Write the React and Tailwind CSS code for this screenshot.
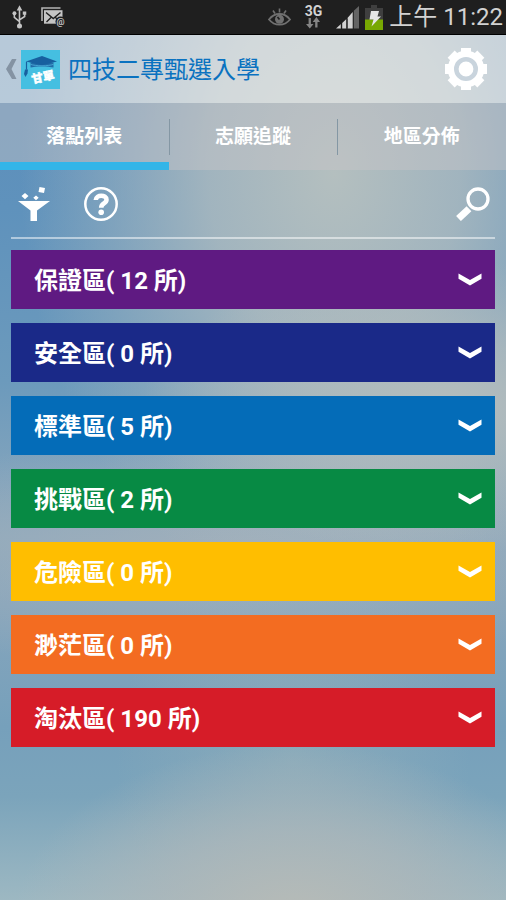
const zones = [
  { name: "保證區", count: 12, color: "bg-[#5f1a82]" },
  { name: "安全區", count: 0, color: "bg-[#1a2988]" },
  { name: "標準區", count: 5, color: "bg-[#046cb8]" },
  { name: "挑戰區", count: 2, color: "bg-[#078a44]" },
  { name: "危險區", count: 0, color: "bg-[#ffbe00]" },
  { name: "渺茫區", count: 0, color: "bg-[#f36c21]" },
  { name: "淘汰區", count: 190, color: "bg-[#d61c28]" },
];

const tabs = ["落點列表", "志願追蹤", "地區分佈"];

function UsbIcon() {
  return <svg width="15" height="26" viewBox="0 0 16 26" fill="none" stroke="#c4c4c4" strokeWidth="1.7">
    <path d="M8 4v17M2.500 10v3.500L8 18M13.500 9v3.500L8 16"/>
    <path d="M8 0.500l3 5.500H5zM11.500 7h3.700v3.700h-3.700z" fill="#c4c4c4" stroke="none"/>
    <circle cx="2.600" cy="9" r="2.100" fill="#c4c4c4" stroke="none"/>
    <circle cx="8" cy="22.500" r="2.700" fill="#c4c4c4" stroke="none"/>
  </svg>;
}

function MailIcon() {
  return <svg width="25" height="20" viewBox="0 0 25 20" fill="none">
    <path d="M1 14V1H19.500" stroke="#b4b4b4" strokeWidth="1.600"/>
    <path d="M3 3.200h18.500v13.500H3z" fill="#c4c4c4"/>
    <path d="M5 5.500l7.300 6L19.500 5.500M5.500 15l4.500-4.500M19 15l-4.500-4.500" stroke="#1f1f1f" strokeWidth="1.400"/>
    <circle cx="19.500" cy="14.500" r="5" fill="#1f1f1f"/>
    <text x="19.500" y="17.500" textAnchor="middle" fontSize="9" fontWeight="700" fontFamily="Roboto, sans-serif" fill="#c4c4c4">@</text>
  </svg>;
}

function EyeIcon() {
  return <svg width="23" height="18" viewBox="0 0 23 18" fill="none" stroke="#707070">
    <path d="M1 11.500C4 7.500 7.500 6 11.500 6s7.500 1.500 10.500 5.500c-3 3.700-6.500 5.200-10.500 5.200S4 15.200 1 11.500z" strokeWidth="1.800"/>
    <circle cx="11.500" cy="11.300" r="4.500" fill="#707070" stroke="none"/>
    <path d="M11.500 11.500L9.500 9" stroke="#1f1f1f" strokeWidth="1.700"/>
    <path d="M11.500 0.500v4M5 2.500l2 3M18 2.500l-2 3" strokeWidth="1.600"/>
  </svg>;
}

function DataArrowsIcon() {
  return <svg width="14" height="12" viewBox="0 0 14 12" fill="#858585">
    <path d="M2.600 1h2.300v6H7.500l-3.700 4.500L0 7h2.600z"/>
    <path d="M9.200 10.500h2.300V5H14L10.400 0 6.700 5h2.500z"/>
  </svg>;
}

function SignalIcon() {
  return <svg width="23" height="23" viewBox="0 0 23 23">
    <path d="M0 22.500L5 18v4.500zM6.200 17l4.200-4v9.500H6.200zM11.500 12l5.200-6v16.500h-5.200z" fill="#d2d2d2"/>
    <path d="M5.300 17.700v4.800M11 12.500v10" stroke="#1f1f1f" strokeWidth="1"/>
    <path d="M17.800 4.800L23 0v22.500h-5.200z" fill="#646464"/>
  </svg>;
}

function BatteryIcon() {
  return <svg width="18" height="25" viewBox="0 0 18 25">
    <path d="M6 0h6v3h6v12H0V3h6z" fill="#3f3f3f"/>
    <path d="M0 14.500h18V25H0z" fill="#78a802"/>
    <path d="M6 6h8l-1.500 5.500h3.500L6.500 21.500l2-7H4.500z" fill="#e6e6e6"/>
  </svg>;
}

function AppLogo() {
  return <svg width="39" height="39" viewBox="0 0 39 39">
    <path d="M0 0h39v39H0z" fill="#45bfe1"/>
    <path d="M9.500 12.500v5c4-1.500 18.500-1.500 23 0v-5z" fill="#216ca7"/>
    <path d="M5 11.500L21 6l15 5.500-15 3.700z" fill="#17609f"/>
    <path d="M9.500 14.300c5 2 18 2 23 0" stroke="#4fb0dc" strokeWidth="0.8" fill="none"/>
    <path d="M5.500 11.700v8" stroke="#17609f" strokeWidth="1.200"/>
    <path d="M4 19.500h3l-.5 4-2 3.500-1.500-3z" fill="#17609f"/>
    <text x="11.500" y="33.500" transform="rotate(-12 11.500 33.500)" fontSize="11.500" fontWeight="900" stroke="#fff" strokeWidth="0.4" fill="#fff" fontFamily='"Noto Sans CJK TC", sans-serif'>甘單</text>
  </svg>;
}

function GearIcon() {
  return <svg width="44" height="44" viewBox="-22 -22 44 44">
    <g fill="#fff">
      <path d="M-5 -21H5V21H-5z"/>
      <path d="M-5 -21H5V21H-5z" transform="rotate(45)"/>
      <path d="M-5 -21H5V21H-5z" transform="rotate(90)"/>
      <path d="M-5 -21H5V21H-5z" transform="rotate(135)"/>
      <circle r="18.300"/>
    </g>
    <circle r="9.700" fill="none" stroke="#c9d4dd" strokeWidth="4.600"/>
  </svg>;
}

function FilterIcon() {
  return <svg width="34" height="36" viewBox="0 0 34 36" fill="#fff">
    <path d="M1 15h32l-13 9.500V35h-6.500V24.500z"/>
    <path d="M22.500 1l5.500 1-1 5-5.500-1zM8 7l3.500 3L8 13.200 4.500 10zM19 9.500l2.700 2.300-2.700 2.400-2.700-2.400z"/>
  </svg>;
}

function HelpIcon() {
  return <svg width="34" height="34" viewBox="0 0 34 34" fill="none" stroke="#fff">
    <circle cx="17" cy="17" r="15.700" strokeWidth="2.500"/>
    <path d="M11.800 13c.3-5.800 10.700-5.500 10.700-.3 0 4-5.300 3.500-5.300 8" strokeWidth="4.600"/>
    <circle cx="17.200" cy="25.300" r="2.800" fill="#fff" stroke="none"/>
  </svg>;
}

function SearchIcon() {
  return <svg width="34" height="34" viewBox="0 0 34 34" fill="none" stroke="#fff">
    <circle cx="22" cy="12" r="10" strokeWidth="3.300"/>
    <path d="M2.500 31.500L13 21.800" strokeWidth="7"/>
  </svg>;
}

function Chevron() {
  return <svg width="24" height="13" viewBox="0 0 24 13" fill="#fff">
    <path d="M.5.500L12 7 23.500.5v5.300L12 12.500.5 5.800z"/>
  </svg>;
}

function StatusBar() {
  return <div className="h-[35px] bg-[#1f1f1f] border-b border-black flex items-center justify-between pl-3 pr-[3px]">
    <div className="flex items-center gap-3.5">
      <UsbIcon/>
      <MailIcon/>
    </div>
    <div className="flex items-center">
      <EyeIcon/>
      <div className="ml-3.5 flex flex-col items-center">
        <span className="text-sm leading-3 font-bold text-[#d2d2d2]">3G</span>
        <DataArrowsIcon/>
      </div>
      <div className="ml-3.5 flex items-center gap-1.5">
        <SignalIcon/>
        <BatteryIcon/>
      </div>
      <span className="ml-1.5 text-2xl leading-8 text-[#d2d2d2]">上午 11:22</span>
    </div>
  </div>;
}

export default function App() {
  return <div className="min-h-screen flex flex-col text-white font-[Roboto,'Noto_Sans_CJK_TC',sans-serif]">
    <StatusBar/>
    <div className="flex-1 bg-[radial-gradient(ellipse_55%_20%_at_58%_102%,#b7bbb7_0%,#adb7bac0_50%,transparent_100%),radial-gradient(ellipse_35%_25%_at_58%_84%,#93afbab0_0%,transparent_100%),radial-gradient(ellipse_60%_17%_at_88%_43%,#b5bdbd_0%,#b3bcbdb0_45%,transparent_100%),radial-gradient(ellipse_62%_50%_at_66%_16%,#b4bfbf_0%,#b0bcbfd0_40%,transparent_100%),radial-gradient(ellipse_80%_14%_at_45%_60%,#a0afbb_0%,transparent_100%),linear-gradient(to_bottom,#5c8cba_0%,#5f92bc_20%,#6c9abc_40%,#8ea9bd_58%,#86a5bc_66%,#76a0bb_80%,#7ba4bb_88%,#9db8c2_100%)]">
      <header className="h-[68px] bg-[#f4f2ee]/60 flex items-center pl-1.5 pr-[18px]">
        <button aria-label="返回" className="flex items-center gap-1">
          <svg width="11" height="22" viewBox="0 0 11 22" fill="#8493a3">
            <path d="M6 1h4.500L5.500 11l5 10H6L0 11z"/>
          </svg>
          <AppLogo/>
        </button>
        <h1 className="ml-2 pt-0.5 flex-1 text-2xl text-[#0a72c0]">四技二專甄選入學</h1>
        <button aria-label="設定"><GearIcon/></button>
      </header>

      <nav role="tablist" className="h-[67px] bg-[#c8c5c8]/45 flex">
        {tabs.map((t, i) => <button key={t} role="tab" aria-selected={i === 0} className={`relative flex-1 text-[19px] font-bold ${i === 0 ? "border-b-8 border-[#33b5e8] pt-2.5" : "pt-0.5"}`}>
          {i > 0 && <span className="absolute left-0 top-4 h-9 w-px bg-[#8497a4]"/>}
          {t}
        </button>)}
      </nav>

      <div className="mx-[11px] h-[69px] border-b-2 border-white/50 flex items-center justify-between pl-1.5 pr-[5px]">
        <div className="flex items-center gap-[33px]">
          <button aria-label="篩選"><FilterIcon/></button>
          <button aria-label="說明"><HelpIcon/></button>
        </div>
        <button aria-label="搜尋"><SearchIcon/></button>
      </div>

      <main className="px-[11px] pt-[11px] pb-6 flex flex-col gap-3.5">
        {zones.map((z) => <button key={z.name} className={`h-[59px] pl-[23px] pr-[13px] flex items-center justify-between text-2xl font-bold ${z.color}`}>
          <span className="pt-0.5">{z.name}( {z.count} 所)</span>
          <Chevron/>
        </button>)}
      </main>
    </div>
  </div>;
}
